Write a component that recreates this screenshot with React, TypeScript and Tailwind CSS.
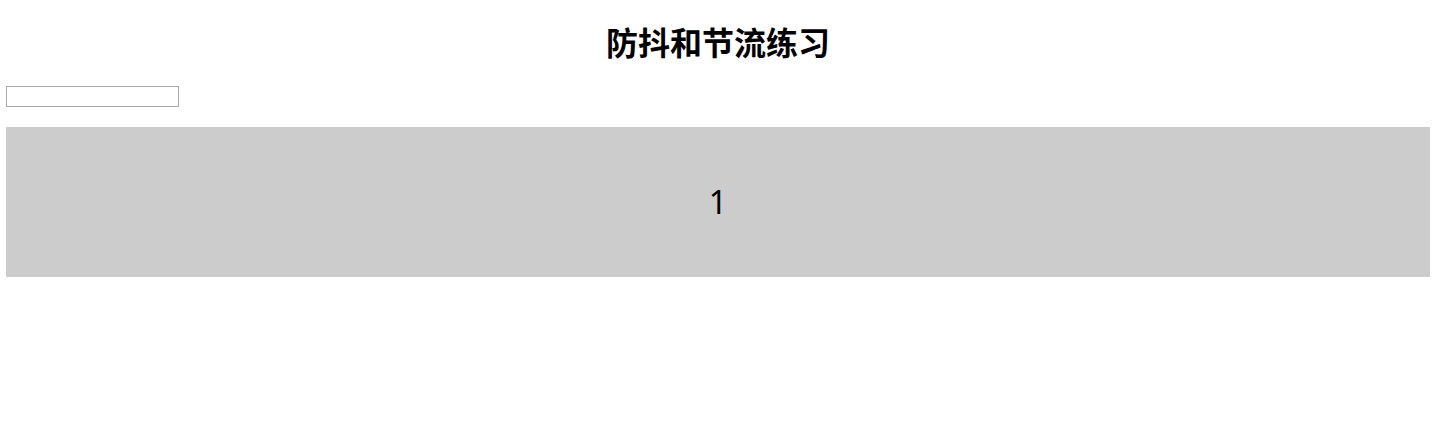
import { useState } from "react";

export default function App() {
  const [value, setValue] = useState("");
  const [count] = useState(1);

  return (
    <div className="min-h-screen bg-white px-[6px] pt-[21px] text-black [font-family:'Noto_Sans','Noto_Sans_CJK_SC',sans-serif]">
      <h1 className="text-center text-[32px] font-bold leading-[40px] [font-family:'Noto_Sans_CJK_SC',sans-serif]">
        防抖和节流练习
      </h1>

      <input
        className="mt-[25px] block h-[21px] w-[173px] border border-[#a9a9a9] px-1 text-[13px] outline-none"
        value={value}
        onChange={(e) => setValue(e.target.value)}
      />

      <div className="mt-[20px] flex h-[150px] items-center justify-center bg-[#cccccc] text-[32px] leading-none">
        {count}
      </div>
    </div>
  );
}
